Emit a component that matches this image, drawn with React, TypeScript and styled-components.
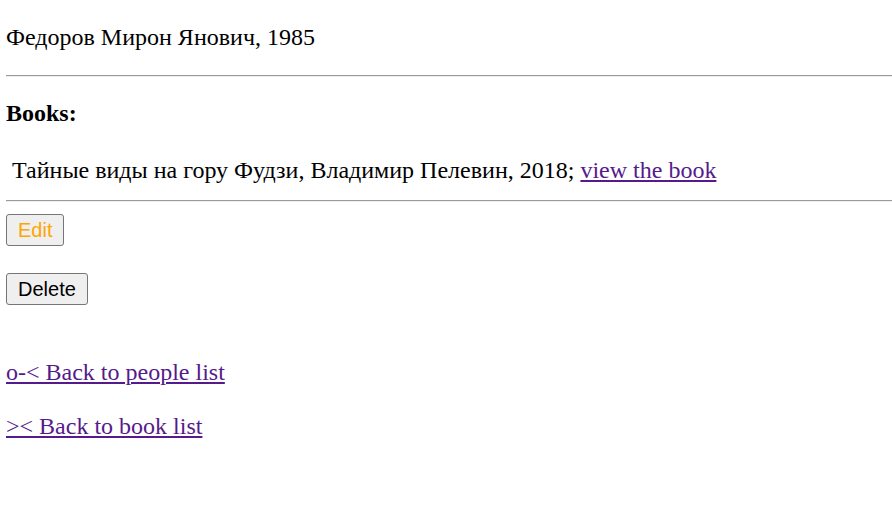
import React from 'react';
import styled, { createGlobalStyle } from 'styled-components';

const GlobalStyle = createGlobalStyle`
  html, body {
    margin: 0;
    padding: 0;
    background: #ffffff;
  }
  body {
    font-family: "Liberation Serif", "Times New Roman", serif;
    font-size: 24px;
    line-height: 28px;
    color: #000000;
  }
`;

const Page = styled.div`
  display: flex;
  flex-direction: column;
  padding: 23px 0 0 6px;
`;

const Line = styled.p<{ $top?: number; $indent?: number; $bold?: boolean }>`
  margin: ${(p) => p.$top ?? 0}px 0 0;
  padding-left: ${(p) => p.$indent ?? 0}px;
  font-weight: ${(p) => (p.$bold ? 700 : 400)};
  white-space: nowrap;
`;

const Rule = styled.hr<{ $top: number }>`
  margin: ${(p) => p.$top}px 0 0;
  height: 0;
  border: none;
  border-top: 1px solid #9a9a9a;
  border-bottom: 1px solid #eeeeee;
`;

const Link = styled.a`
  color: #551a8b;
  text-decoration: underline;
  text-decoration-thickness: 2px;
  text-underline-offset: 2px;
  cursor: pointer;
`;

const Form = styled.form<{ $top: number }>`
  margin: ${(p) => p.$top}px 0 0;
  display: flex;
`;

const Button = styled.button<{ $tone?: string }>`
  height: 32px;
  padding: 0 11px;
  font-family: "Liberation Sans", Arial, sans-serif;
  font-size: 20px;
  color: ${(p) => p.$tone ?? '#000000'};
  background: #efefef;
  border: 1px solid #767676;
  border-radius: 3px;
  cursor: pointer;
`;

export default function App() {
  return (
    <>
      <GlobalStyle />
      <Page>
        <Line>Федоров Мирон Янович, 1985</Line>
        <Rule $top={24} />
        <Line $top={22} $bold>Books:</Line>
        <Line $top={29} $indent={6}>
          Тайные виды на гору Фудзи, Владимир Пелевин, 2018; <Link>view the book</Link>
        </Line>
        <Rule $top={16} />
        <Form $top={12} onSubmit={(e) => e.preventDefault()}>
          <Button type="button" $tone="#ffa500">Edit</Button>
        </Form>
        <Form $top={27} onSubmit={(e) => e.preventDefault()}>
          <Button type="submit">Delete</Button>
        </Form>
        <Line $top={53}>
          <Link>o-&lt; Back to people list</Link>
        </Line>
        <Line $top={26}>
          <Link>&gt;&lt; Back to book list</Link>
        </Line>
      </Page>
    </>
  );
}
